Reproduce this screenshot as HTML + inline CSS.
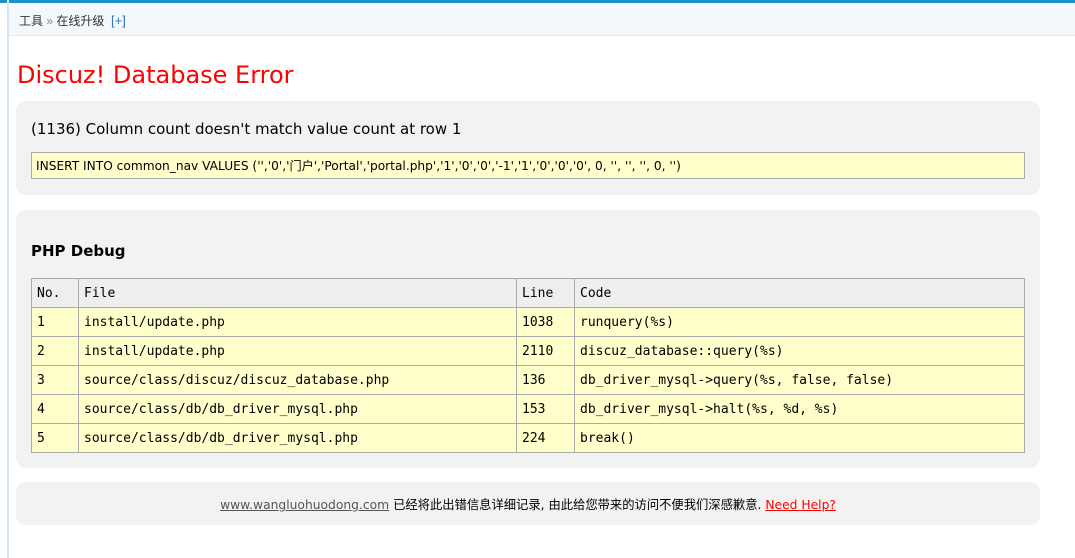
<!DOCTYPE html>
<html><head><meta charset="utf-8"><style>
body{margin:0;width:1075px;height:558px;background:#fff;position:relative;overflow:hidden;font-family:"DejaVu Sans","Noto Sans CJK SC",sans-serif}
.lb{position:absolute;left:7px;top:0;width:2px;height:558px;background:#d6e6f2}
.top{position:absolute;left:0;top:0;width:1075px;height:3px;background:#1a93c4}
.hd{position:absolute;left:9px;top:3px;width:1066px;height:32px;background:#f2f8fb;border-bottom:1px solid #dce9f0}
.hd span{position:absolute;left:10px;top:9px;font-size:12px;color:#333;font-family:"Liberation Sans","Noto Sans CJK SC",sans-serif}
h1{position:absolute;left:17px;top:61px;margin:0;font-weight:normal;font-size:24px;color:#f00}
.box{position:absolute;left:16px;width:1024px;background:#f2f2f2;border-radius:10px}
.msg{position:absolute;left:15px;top:19px;font-size:15px;color:#000}
.sql{position:absolute;left:15px;top:51px;height:27px;border:1px solid #aaa;background:#ffffcc;font-size:12.2px;line-height:27px;padding-left:4px;box-sizing:border-box;width:994px;font-family:"DejaVu Sans","Noto Sans CJK SC",sans-serif}
h3{position:absolute;left:15px;top:32px;margin:0;font-size:15px}
table{position:absolute;left:15px;top:68px;border-collapse:collapse;width:994px;font-family:"DejaVu Sans Mono","Liberation Mono",monospace;font-size:13px}
td{border:1px solid #aaa;height:27px;padding:1px 5px 0;background:#ffffcc}
tr:first-child td{background:#eee}
.ft{position:absolute;left:0;width:1024px;top:13px;text-align:center;font-size:12.3px;font-family:"DejaVu Sans","Noto Sans CJK SC",sans-serif}
.ft a{color:#555;text-decoration:underline}.ft a.r{color:#f00}
</style></head><body>
<div class="top"></div><div class="lb"></div>
<div class="hd"><span>工具 <span style="position:static;color:#888">»</span> 在线升级 &nbsp;<span style="position:static;color:#3a6fb0;font-size:13px">[+]</span></span></div>
<h1>Discuz! Database Error</h1>
<div class="box" style="top:101px;height:94px">
<div class="msg">(1136) Column count doesn't match value count at row 1</div>
<div class="sql">INSERT INTO common_nav VALUES ('','0','门户','Portal','portal.php','1','0','0','-1','1','0','0','0', 0, '', '', '', 0, '')</div>
</div>
<div class="box" style="top:210px;height:258px">
<h3>PHP Debug</h3>
<table>
<tr><td style="width:36px">No.</td><td style="width:427px">File</td><td style="width:47px">Line</td><td>Code</td></tr>
<tr><td>1</td><td>install/update.php</td><td>1038</td><td>runquery(%s)</td></tr>
<tr><td>2</td><td>install/update.php</td><td>2110</td><td>discuz_database::query(%s)</td></tr>
<tr><td>3</td><td>source/class/discuz/discuz_database.php</td><td>136</td><td>db_driver_mysql-&gt;query(%s, false, false)</td></tr>
<tr><td>4</td><td>source/class/db/db_driver_mysql.php</td><td>153</td><td>db_driver_mysql-&gt;halt(%s, %d, %s)</td></tr>
<tr><td>5</td><td>source/class/db/db_driver_mysql.php</td><td>224</td><td>break()</td></tr>
</table>
</div>
<div class="box" style="top:482px;height:43px">
<div class="ft"><a>www.wangluohuodong.com</a> 已经将此出错信息详细记录, 由此给您带来的访问不便我们深感歉意. <a class="r">Need Help?</a></div>
</div>
</body></html>
